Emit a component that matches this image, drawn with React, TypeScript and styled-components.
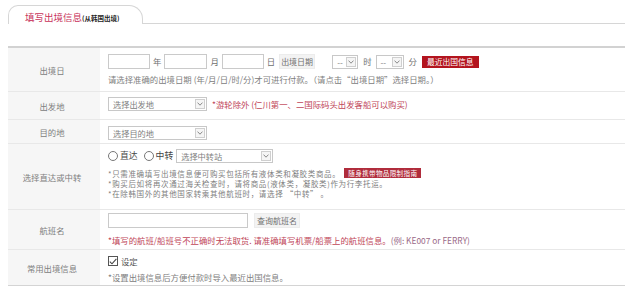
import styled, { createGlobalStyle } from "styled-components";

const GlobalStyle = createGlobalStyle`
  body {
    margin: 0;
    background: #fff;
    font-family: "Noto Sans CJK SC", "Liberation Sans", sans-serif;
  }
`;

const Page = styled.div`
  width: 617px;
  padding: 5px 0 0 8px;
`;

const TabBar = styled.div`
  display: flex;
  align-items: flex-end;
  height: 19px;
`;

const Tab = styled.div`
  width: 135px;
  height: 19px;
  box-sizing: border-box;
  border: 1px solid #d6d6d6;
  border-bottom: none;
  border-radius: 10px 14px 0 0;
  padding: 5px 0 0 16px;
  display: flex;
  align-items: baseline;
  white-space: nowrap;
`;

const TabTitle = styled.span`
  color: #c8325a;
  font-size: 9.5px;
  line-height: 12px;
`;

const TabSub = styled.span`
  color: #222;
  font-size: 6.5px;
  font-weight: 700;
`;

const TabLine = styled.div`
  flex: 1;
  border-bottom: 1px solid #d6d6d6;
`;

const Form = styled.div`
  margin-top: 22px;
  border-top: 2px solid #d2d2d2;
  border-bottom: 1px solid #d4d4d4;
`;

const Row = styled.div<{ $last?: boolean }>`
  display: grid;
  grid-template-columns: 92px 1fr;
  border-bottom: ${(p) => (p.$last ? "none" : "1px solid #e8e8e8")};
`;

const Label = styled.div`
  background: #f6f6f6;
  color: #808080;
  font-size: 8.4px;
  display: flex;
  align-items: center;
  justify-content: center;
  padding-right: 4px;
`;

const Content = styled.div<{ $pad: string; $gap?: number }>`
  padding: ${(p) => p.$pad};
  display: flex;
  flex-direction: column;
  justify-content: center;
  gap: ${(p) => p.$gap ?? 0}px;
  font-size: 8.4px;
  color: #808080;
`;

const Line = styled.div<{ $lh?: number }>`
  display: flex;
  align-items: center;
  white-space: nowrap;
  line-height: ${(p) => p.$lh ?? 12}px;
`;

const SmallLine = styled.div`
  display: flex;
  align-items: center;
  white-space: nowrap;
  line-height: 11px;
  height: 10px;
  font-size: 7.5px;
  letter-spacing: 0.65px;
`;

const TextInput = styled.input<{ $w: number }>`
  width: ${(p) => p.$w}px;
  height: 15px;
  box-sizing: border-box;
  border: 1px solid #cacaca;
  padding: 0;
  margin: 0;
  background: #fff;
`;

const Unit = styled.span<{ $ml?: number; $mr?: number }>`
  color: #707070;
  margin-left: ${(p) => p.$ml ?? 3}px;
  margin-right: ${(p) => p.$mr ?? 3}px;
`;

const GrayButton = styled.button<{ $w: number; $ml: number }>`
  width: ${(p) => p.$w}px;
  height: 15px;
  margin-left: ${(p) => p.$ml}px;
  padding: 0;
  border: 1px solid #ececec;
  background: #f3f3f3;
  color: #707070;
  font-family: inherit;
  font-size: 8px;
`;

const RedButton = styled.button`
  height: 12px;
  margin-left: 5px;
  padding: 0 5px;
  border: none;
  background: #b3141e;
  color: #fff;
  font-family: inherit;
  font-size: 7.8px;
  line-height: 12px;
`;

const Badge = styled.span`
  display: inline-block;
  margin-left: 4px;
  height: 10px;
  padding: 0 4px;
  background: #b02c3c;
  color: #fff;
  font-size: 6.6px;
  letter-spacing: 0.3px;
  line-height: 10px;
`;

const SelectBox = styled.div<{ $w: number; $ml?: number }>`
  width: ${(p) => p.$w}px;
  height: 14px;
  margin-left: ${(p) => p.$ml ?? 0}px;
  box-sizing: border-box;
  border: 1px solid #c8c8c8;
  display: flex;
  align-items: center;
  background: #fff;
`;

const SelectText = styled.span`
  flex: 1;
  padding-left: 4px;
  color: #808080;
  font-size: 8.2px;
  line-height: 12px;
  overflow: hidden;
`;

const SelectArrow = styled.span`
  width: 10px;
  height: 10px;
  margin-right: 1px;
  box-sizing: border-box;
  border: 1px solid #cfcfcf;
  background: #f5f5f5;
  display: flex;
  align-items: center;
  justify-content: center;
`;

const Note = styled.span<{ $color?: string }>`
  color: ${(p) => p.$color ?? "#808080"};
`;

const RedNote = styled.span`
  color: #c04558;
  margin-left: 5px;
`;

const Radio = styled.span`
  width: 8px;
  height: 8px;
  border: 1px solid #777;
  border-radius: 50%;
  margin-right: 2px;
`;

const RadioLabel = styled.span<{ $mr: number }>`
  color: #444;
  font-size: 8.8px;
  margin-right: ${(p) => p.$mr}px;
`;

const Check = styled.span`
  width: 10px;
  height: 10px;
  box-sizing: border-box;
  border: 1px solid #555;
  margin-right: 3px;
  display: flex;
  align-items: center;
  justify-content: center;
`;

function Select({ w, ml, text }: { w: number; ml?: number; text: string }) {
  return (
    <SelectBox $w={w} $ml={ml}>
      <SelectText>{text}</SelectText>
      <SelectArrow>
        <svg width="6" height="4" viewBox="0 0 6 4">
          <path d="M0.5 0.6 L3 3.2 L5.5 0.6" fill="none" stroke="#888" strokeWidth="1" />
        </svg>
      </SelectArrow>
    </SelectBox>
  );
}

export default function App() {
  return (
    <>
      <GlobalStyle />
      <Page>
        <TabBar>
          <Tab>
            <TabTitle>填写出境信息</TabTitle>
            <TabSub>(从韩国出境)</TabSub>
          </Tab>
          <TabLine />
        </TabBar>

        <Form>
          <Row>
            <Label>出境日</Label>
            <Content $pad="6px 8px 6px" $gap={4}>
              <Line $lh={15}>
                <TextInput $w={42} />
                <Unit>年</Unit>
                <TextInput $w={43} />
                <Unit>月</Unit>
                <TextInput $w={42} />
                <Unit>日</Unit>
                <GrayButton $w={36} $ml={1}>出境日期</GrayButton>
                <Select w={26} ml={17} text="--" />
                <Unit $ml={5} $mr={4}>时</Unit>
                <Select w={28} text="--" />
                <Unit $ml={5} $mr={0}>分</Unit>
                <RedButton>最近出国信息</RedButton>
              </Line>
              <Line>
                <Note>请选择准确的出境日期 (年/月/日/时/分)才可进行付款。（请点击“出境日期”选择日期。）</Note>
              </Line>
            </Content>
          </Row>

          <Row>
            <Label>出发地</Label>
            <Content $pad="5px 8px 8px">
              <Line $lh={14}>
                <Select w={99} text="选择出发地" />
                <RedNote>*游轮除外 (仁川第一、二国际码头出发客船可以购买)</RedNote>
              </Line>
            </Content>
          </Row>

          <Row>
            <Label>目的地</Label>
            <Content $pad="6px 8px 3px">
              <Line $lh={14}>
                <Select w={99} text="选择目的地" />
              </Line>
            </Content>
          </Row>

          <Row>
            <Label>选择直达或中转</Label>
            <Content $pad="5px 8px 11px" $gap={5}>
              <Line $lh={14}>
                <Radio />
                <RadioLabel $mr={6}>直达</RadioLabel>
                <Radio />
                <RadioLabel $mr={3}>中转</RadioLabel>
                <Select w={97} text="选择中转站" />
              </Line>
              <div>
                <SmallLine>
                  <Note>*只需准确填写出境信息便可购买包括所有液体类和凝胶类商品。</Note>
                  <Badge>随身携带物品限制指南</Badge>
                </SmallLine>
                <SmallLine>
                  <Note>*购买后如将再次通过海关检查时，请将商品(液体类，凝胶类)作为行李托运。</Note>
                </SmallLine>
                <SmallLine>
                  <Note>*在除韩国外的其他国家转乘其他航班时，请选择 “中转” 。</Note>
                </SmallLine>
              </div>
            </Content>
          </Row>

          <Row>
            <Label>航班名</Label>
            <Content $pad="3px 8px 3px" $gap={6}>
              <Line $lh={15}>
                <TextInput $w={140} />
                <GrayButton $w={46} $ml={6}>查询航班名</GrayButton>
              </Line>
              <Line>
                <Note $color="#c04558">*填写的航班/船班号不正确时无法取货. 请准确填写机票/船票上的航班信息。</Note>
                <Note $color="#9a6a88">(例: KE007 or FERRY)</Note>
              </Line>
            </Content>
          </Row>

          <Row $last>
            <Label>常用出境信息</Label>
            <Content $pad="5px 8px 2px" $gap={4}>
              <Line>
                <Check>
                  <svg width="8" height="7" viewBox="0 0 8 7">
                    <path d="M0.8 3.6 L3 5.8 L7.4 0.8" fill="none" stroke="#444" strokeWidth="1.1" />
                  </svg>
                </Check>
                <Note $color="#555">设定</Note>
              </Line>
              <Line>
                <Note>*设置出境信息后方便付款时导入最近出国信息。</Note>
              </Line>
            </Content>
          </Row>
        </Form>
      </Page>
    </>
  );
}
